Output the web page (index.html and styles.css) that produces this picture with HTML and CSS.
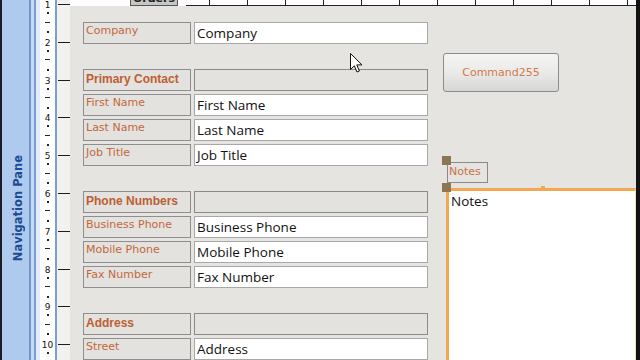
FILE: index.html
```html
<!DOCTYPE html>
<html lang="en">
<head>
  <meta charset="UTF-8">
  <title>Contact Details - Design View</title>
  <link rel="stylesheet" href="styles.css">
</head>
<body>
  <div class="app">
    <aside class="nav"><span class="navTitle">Navigation Pane</span></aside>
    <div class="navEdge"></div>

    <div class="vruler">
      <div class="seg"><span class="num">1</span><i class="dot"></i><i class="dash"></i><i class="dot low"></i></div>
      <div class="seg"><span class="num">2</span><i class="dot"></i><i class="dash"></i><i class="dot low"></i></div>
      <div class="seg"><span class="num">3</span><i class="dot"></i><i class="dash"></i><i class="dot low"></i></div>
      <div class="seg"><span class="num">4</span><i class="dot"></i><i class="dash"></i><i class="dot low"></i></div>
      <div class="seg"><span class="num">5</span><i class="dot"></i><i class="dash"></i><i class="dot low"></i></div>
      <div class="seg"><span class="num">6</span><i class="dot"></i><i class="dash"></i><i class="dot low"></i></div>
      <div class="seg"><span class="num">7</span><i class="dot"></i><i class="dash"></i><i class="dot low"></i></div>
      <div class="seg"><span class="num">8</span><i class="dot"></i><i class="dash"></i><i class="dot low"></i></div>
      <div class="seg"><span class="num">9</span><i class="dot"></i><i class="dash"></i><i class="dot low"></i></div>
      <div class="seg"><span class="num">10</span><i class="dot"></i><i class="dash"></i><i class="dot low"></i></div>
    </div>
    <div class="vedge"></div>
    <div class="ticks"></div>

    <main class="canvas">
      <div class="topbar">
        <div class="tabActive"></div>
        <div class="tab"><span>Orders</span></div>
        <div class="tabGap"></div>
        <div class="hruler"></div>
      </div>

      <div class="surface">
        <div class="fields">
          <div class="group">
            <div class="row"><div class="lbl">Company</div><div class="val">Company</div></div>
          </div>
          <div class="group">
            <div class="row"><div class="lbl head">Primary Contact</div><div class="val blank"></div></div>
            <div class="row"><div class="lbl">First Name</div><div class="val">First Name</div></div>
            <div class="row"><div class="lbl">Last Name</div><div class="val">Last Name</div></div>
            <div class="row"><div class="lbl">Job Title</div><div class="val">Job Title</div></div>
          </div>
          <div class="group">
            <div class="row"><div class="lbl head">Phone Numbers</div><div class="val blank"></div></div>
            <div class="row"><div class="lbl">Business Phone</div><div class="val">Business Phone</div></div>
            <div class="row"><div class="lbl">Mobile Phone</div><div class="val">Mobile Phone</div></div>
            <div class="row"><div class="lbl">Fax Number</div><div class="val">Fax Number</div></div>
          </div>
          <div class="group">
            <div class="row"><div class="lbl head">Address</div><div class="val blank"></div></div>
            <div class="row"><div class="lbl">Street</div><div class="val">Address</div></div>
          </div>
        </div>

        <div class="side">
          <button class="cmd">Command255</button>
          <div class="notes">
            <span class="handle hTop"></span>
            <div class="notesLabel">Notes</div>
            <span class="handle hBottom"></span>
            <div class="notesBox">Notes<span class="grip"></span></div>
          </div>
        </div>

        <!-- mouse pointer -->
        <svg class="cursor" width="13" height="20" viewBox="0 0 13 20">
          <path d="M0.5 0.5 L0.5 16.5 L4.3 12.8 L7 19 L9.4 18 L6.8 11.9 L12 11.9 Z" fill="#fff" stroke="#111" stroke-width="1"/>
        </svg>
      </div>
    </main>

    <div class="edgeRight"></div>
  </div>
</body>
</html>
```

FILE: styles.css
```css
html, body {
  margin: 0;
  padding: 0;
  width: 640px;
  height: 360px;
  overflow: hidden;
  background: #e5e4e0;
}

.app {
  display: flex;
  height: 360px;
}

/* ─────────── Navigation pane (collapsed) ─────────── */
.nav {
  width: 29px;
  box-sizing: border-box;
  border-left: 2px solid #1c1c26;
  background: #aecaee;
  display: flex;
  flex-direction: column;
  align-items: center;
  padding: 155px 0 0 4px;
}
.navTitle {
  writing-mode: vertical-rl;
  transform: rotate(180deg);
  font-family: "DejaVu Sans", sans-serif;
  font-weight: bold;
  font-size: 11.5px;
  color: #1d4b92;
  white-space: nowrap;
}
.navEdge {
  width: 11px;
  background: linear-gradient(to right, #6f95cb 0 2px, #c6daf4 2px 5px, #7a9ed3 5px 7px, #e3ecf8 7px 11px);
}

/* ─────────── Vertical ruler ─────────── */
.vruler {
  width: 15px;
  background: #fff;
  display: flex;
  flex-direction: column;
}
.seg {
  height: 37.8px;
  flex: none;
  display: flex;
  flex-direction: column;
  align-items: center;
}
.num {
  height: 11px;
  line-height: 11px;
  font-family: "DejaVu Sans", sans-serif;
  font-size: 9px;
  color: #111;
}
.dot {
  width: 2px;
  height: 2px;
  margin-top: 1px;
  background: #222;
}
.dash {
  width: 5px;
  height: 1px;
  margin-top: 7.5px;
  background: #222;
}
.dot.low {
  margin-top: 8.5px;
}
.vedge {
  width: 2px;
  background: #7a9ed3;
}
.ticks {
  width: 13px;
  background: #f1f1ef repeating-linear-gradient(to bottom, transparent 0 4px, #1e1e1e 4px 5px, transparent 5px 37.8px);
  background-size: 12px 100%;
  background-repeat: no-repeat;
  background-position: right top;
}

/* ─────────── Design canvas ─────────── */
.canvas {
  flex: 1;
  display: flex;
  flex-direction: column;
  min-width: 0;
}
.topbar {
  height: 6px;
  display: flex;
  flex: none;
}
.tabActive {
  width: 60px;
  background: #fff;
}
.tab {
  width: 48px;
  box-sizing: border-box;
  background: #c6c6c4;
  border: 1px solid #555;
  border-top: none;
  overflow: hidden;
  text-align: center;
}
.tab span {
  display: block;
  margin-top: -8px;
  font-family: "DejaVu Sans", sans-serif;
  font-weight: bold;
  font-size: 11px;
  color: #222;
}
.tabGap {
  width: 8px;
  background: #fff;
}
.hruler {
  flex: 1;
  height: 5px;
  border-bottom: 1px solid #222;
  background: #fff repeating-linear-gradient(to right, transparent 0 23px, #222 23px 24px, transparent 24px 38px);
}

.surface {
  flex: 1;
  position: relative;
  display: flex;
  padding: 16px 0 0 13px;
  background: #e5e4e0;
  overflow: hidden;
}

.fields {
  width: 345px;
  flex: none;
  display: flex;
  flex-direction: column;
}
.group {
  display: flex;
  flex-direction: column;
  gap: 3px;
}
.group + .group {
  margin-top: 25px;
}
.row {
  display: flex;
  gap: 3px;
  height: 22px;
}
.lbl {
  width: 108px;
  box-sizing: border-box;
  border: 1px solid #8e8e8e;
  background: #e3e2de;
  padding: 1px 2px 0;
  font-family: "DejaVu Sans", sans-serif;
  font-size: 11px;
  line-height: 14px;
  color: #c4673c;
  white-space: nowrap;
}
.lbl.head {
  font-family: "Liberation Sans", Arial, sans-serif;
  font-weight: bold;
  font-size: 12px;
  padding-top: 2px;
  color: #bd5e32;
}
.val {
  flex: 1;
  box-sizing: border-box;
  border: 1px solid #a8a8a8;
  background: #fff;
  padding: 0 2px;
  font-family: "Open Sans", sans-serif;
  font-size: 13.5px;
  line-height: 20px;
  color: #111;
  white-space: nowrap;
}
.val.blank {
  background: #e3e2de;
  border-color: #8a8a8a;
}

/* ─────────── Right side controls ─────────── */
.side {
  flex: 1;
  margin-left: 14px;
  display: flex;
  flex-direction: column;
  align-items: flex-start;
}
.cmd {
  margin: 31px 0 0 1px;
  width: 116px;
  height: 39px;
  border: 1px solid #8c8c8c;
  border-radius: 3px;
  background: linear-gradient(to bottom, #f4f4f3, #eaeae8 50%, #d6d6d4);
  font-family: "DejaVu Sans", sans-serif;
  font-size: 11px;
  color: #d4784b;
  padding: 0;
}

.notes {
  position: relative;
  align-self: stretch;
  flex: 1;
  margin-top: 70px;
  display: flex;
  flex-direction: column;
}
.handle {
  position: absolute;
  left: 0;
  width: 9px;
  height: 9px;
  background: #8b7852;
}
.hTop { top: -6px; }
.hBottom { top: 21px; z-index: 2; }

.notesLabel {
  margin-left: 5px;
  width: 41px;
  height: 21px;
  box-sizing: border-box;
  border: 1px solid #8a8a8a;
  padding: 1px 0 0 1px;
  font-family: "DejaVu Sans", sans-serif;
  font-size: 11px;
  line-height: 16px;
  color: #c9714a;
}
.notesBox {
  position: relative;
  flex: 1;
  margin: 5px 0 0 4px;
  border-top: 3px solid #f1a852;
  border-left: 3px solid #f1a852;
  border-right: 1px solid #efe2a8;
  background: #fff;
  padding: 0 2px;
  font-family: "Open Sans", sans-serif;
  font-size: 13.5px;
  line-height: 20px;
  color: #111;
}
.grip {
  position: absolute;
  top: -5px;
  left: 92px;
  width: 4px;
  height: 3px;
  background: #f1a852;
}

.cursor {
  position: absolute;
  left: 280px;
  top: 47px;
}

.edgeRight {
  width: 4px;
  background: #121212;
}
```
